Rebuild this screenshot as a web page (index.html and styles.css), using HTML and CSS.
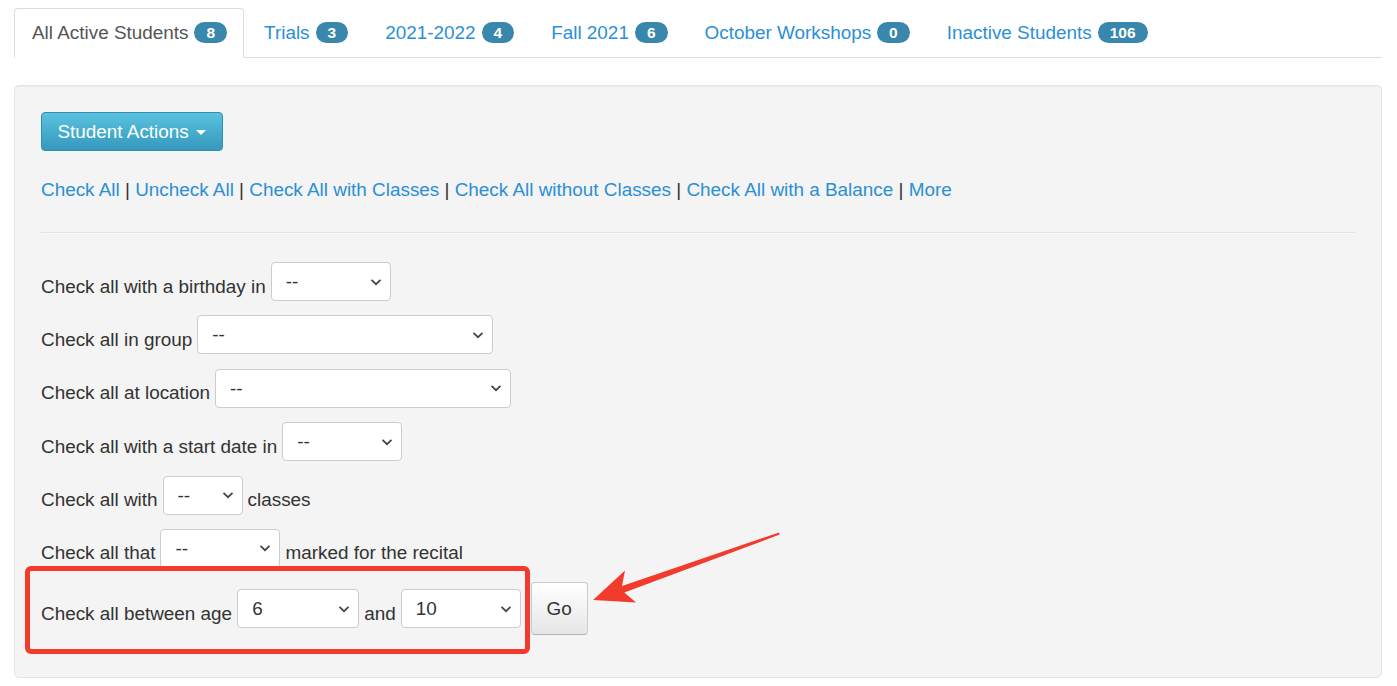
FILE: index.html
```html
<!DOCTYPE html>
<html lang="en">
<head>
    <meta charset="UTF-8">
    <title>Students</title>
    <link rel="stylesheet" href="styles.css">
</head>
<body>
    <div class="page">
        <ul class="nav-tabs">
            <li class="active"><a href="#">All Active Students<span class="badge">8</span></a></li>
            <li><a href="#">Trials<span class="badge">3</span></a></li>
            <li><a href="#">2021-2022<span class="badge">4</span></a></li>
            <li><a href="#">Fall 2021<span class="badge">6</span></a></li>
            <li><a href="#">October Workshops<span class="badge">0</span></a></li>
            <li><a href="#">Inactive Students<span class="badge">106</span></a></li>
        </ul>

        <div class="well">
            <button class="btn-info" type="button">Student Actions <span class="caret"></span></button>

            <div class="quick-links">
                <a href="#">Check All</a> | <a href="#">Uncheck All</a> | <a href="#">Check All with Classes</a> | <a href="#">Check All without Classes</a> | <a href="#">Check All with a Balance</a> | <a href="#">More</a>
            </div>

            <hr>

            <div class="row">
                <span class="lbl">Check all with a birthday in</span>
                <select class="w120"><option>--</option></select>
            </div>
            <div class="row">
                <span class="lbl">Check all in group</span>
                <select class="w296"><option>--</option></select>
            </div>
            <div class="row">
                <span class="lbl">Check all at location</span>
                <select class="w296"><option>--</option></select>
            </div>
            <div class="row">
                <span class="lbl">Check all with a start date in</span>
                <select class="w120"><option>--</option></select>
            </div>
            <div class="row">
                <span class="lbl">Check all with</span>
                <select class="w80"><option>--</option></select>
                <span class="lbl">classes</span>
            </div>
            <div class="row">
                <span class="lbl">Check all that</span>
                <select class="w120"><option>--</option></select>
                <span class="lbl">marked for the recital</span>
            </div>
            <div class="row age-row">
                <span class="lbl">Check all between age</span>
                <select class="w122"><option>6</option></select>
                <span class="lbl">and</span>
                <select class="w120"><option>10</option></select>
                <button class="btn-go" type="button">Go</button>

                <div class="highlight"></div>
                <svg class="arrow" width="210" height="90" viewBox="0 0 210 90">
                    <polygon points="13,77 45,47.5 42,63 199,9.4 199.6,11.6 44.3,69.5 56,79.5" fill="#f23b2c"/>
                </svg>
            </div>
        </div>
    </div>
</body>
</html>
```

FILE: styles.css
```css
body {
    margin: 0;
    background-color: #fff;
    font-family: "Liberation Sans", Arial, sans-serif;
    font-size: 18.9px;
    color: #333;
}

.page {
    padding: 8px 15px 0 14px;
}

.nav-tabs {
    display: flex;
    list-style: none;
    margin: 0;
    padding: 0;
    border-bottom: 1px solid #ddd;
}

.nav-tabs li {
    margin-right: 2px;
    margin-bottom: -1px;
}

.nav-tabs a {
    display: block;
    padding: 11px 16px 12px 17px;
    line-height: 25px;
    border: 1px solid transparent;
    border-radius: 4px 4px 0 0;
    color: #2b8fd6;
    text-decoration: none;
}

.nav-tabs .active a {
    color: #555;
    background-color: #fff;
    border-color: #ddd;
    border-bottom-color: #fff;
}

.badge {
    display: inline-block;
    margin-left: 6px;
    padding: 0 12px;
    height: 21px;
    line-height: 21px;
    border-radius: 11px;
    background-color: #3a87ad;
    color: #fff;
    font-size: 15.5px;
    font-weight: bold;
    vertical-align: 1px;
}

.well {
    margin-top: 27px;
    padding: 26px 26px 27px 26px;
    background-color: #f4f4f4;
    border: 1px solid #e3e3e3;
    border-radius: 5px;
    box-shadow: inset 0 1px 1px rgba(0, 0, 0, 0.03);
}

.btn-info {
    height: 39px;
    padding: 0 15.5px;
    font-family: inherit;
    font-size: 18.9px;
    color: #fff;
    background-image: linear-gradient(to bottom, #5bc2e0, #3499bd);
    border: 1px solid #2f8fb0;
    border-radius: 4px;
    cursor: pointer;
}

.caret {
    display: inline-block;
    width: 0;
    height: 0;
    margin-left: 2px;
    vertical-align: middle;
    border-top: 5px solid #fff;
    border-left: 5px solid transparent;
    border-right: 5px solid transparent;
}

.quick-links {
    margin-top: 26px;
    line-height: 26px;
    color: #333;
}

.quick-links a {
    color: #2b8fd6;
    text-decoration: none;
}

hr {
    margin: 29px 0 28px 0;
    border: 0;
    border-top: 1px solid #e4e4e4;
    border-bottom: 1px solid #fafafa;
}

.row {
    display: flex;
    align-items: center;
    gap: 5px;
    margin-bottom: 14.4px;
}

.lbl {
    margin-top: 10px;
    white-space: nowrap;
}

select {
    -webkit-appearance: none;
    appearance: none;
    height: 39px;
    padding: 0 30px 0 14px;
    font-family: inherit;
    font-size: 18.9px;
    color: #333;
    background-color: #fff;
    background-image: url("data:image/svg+xml;utf8,<svg xmlns='http://www.w3.org/2000/svg' width='12' height='8' viewBox='0 0 12 8'><path d='M1.5 1.8 L6 6.2 L10.5 1.8' fill='none' stroke='%23444' stroke-width='1.7'/></svg>");
    background-repeat: no-repeat;
    background-position: right 8px center;
    border: 1px solid #ccc;
    border-radius: 4px;
}

.w80 { width: 80px; }
.w120 { width: 120px; }
.w122 { width: 122px; }
.w296 { width: 296px; }

.age-row {
    position: relative;
    margin-top: 2px;
}

.btn-go {
    width: 57px;
    height: 53px;
    margin-left: 5px;
    font-family: inherit;
    font-size: 18.9px;
    color: #333;
    background-image: linear-gradient(to bottom, #fff, #e6e6e6);
    border: 1px solid #ccc;
    border-bottom-color: #b3b3b3;
    border-radius: 4px;
    cursor: pointer;
}

.highlight {
    position: absolute;
    left: -16px;
    top: -16px;
    width: 495px;
    height: 78px;
    border: 5px solid #f23b2c;
    border-radius: 6px;
    pointer-events: none;
}

.arrow {
    position: absolute;
    left: 539px;
    top: -59px;
}
```
